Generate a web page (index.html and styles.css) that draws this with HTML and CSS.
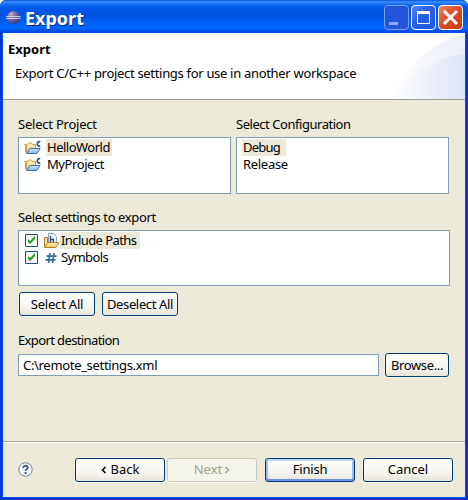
FILE: index.html
```
<!DOCTYPE html>
<html lang="en">
<head>
<meta charset="utf-8">
<title>Export</title>
<link rel="stylesheet" href="styles.css">
</head>
<body>
<svg class="defs" width="0" height="0" aria-hidden="true">
  <defs>
    <linearGradient id="gold" x1="0" y1="0" x2="0" y2="1"><stop offset="0" stop-color="#fff3c0"/><stop offset="1" stop-color="#f3cb73"/></linearGradient>
    <linearGradient id="sky" x1="0" y1="0" x2="0" y2="1"><stop offset="0" stop-color="#d5eafa"/><stop offset="1" stop-color="#7eb0dc"/></linearGradient>
    <symbol id="project" viewBox="0 0 17 16">
      <path d="M2.500 13V4.500h1l1-1.500h3l1 1.500h3V9" fill="url(#gold)" stroke="#cf9a4c"/>
      <path d="M0 4.500h2M1.500 5v7" stroke="#d8a864" fill="none"/>
      <path d="M2.500 13.500 6 8.500h10.200l-3.400 5z" fill="url(#sky)" stroke="#3c6fb8"/>
      <path d="M16.300 1.800c-4-1.200-4 5.400 0 4.200" fill="none" stroke="#245583" stroke-width="1.700"/>
    </symbol>
    <symbol id="check" viewBox="0 0 13 13">
      <path d="M.5.5h12v12H.5z" fill="#f7f7f4" stroke="#1c5180"/>
      <path d="M3 5v3l2 2 5-5V2L5 7z" fill="#21a121"/>
    </symbol>
  </defs>
</svg>
<div class="window">
  <div class="titlebar">
    <svg class="logo" viewBox="0 0 16 16"><defs><radialGradient id="orb" cx=".3" cy=".25" r=".9"><stop offset="0" stop-color="#d0a9b8"/><stop offset=".5" stop-color="#6d62a6"/><stop offset="1" stop-color="#2b2a70"/></radialGradient></defs><circle cx="8.500" cy="7.500" r="6.500" fill="url(#orb)"/><path d="M1 6.500h14.500M1 8.500h14.500" stroke="#d5d8f0" stroke-width=".9"/></svg>
    <h1 class="title">Export</h1>
    <div class="controls">
      <span class="ctl min"><i></i></span>
      <span class="ctl max"><i></i></span>
      <span class="ctl close"><svg viewBox="0 0 25 25"><path d="M7 7l11 11M18 7 7 18" stroke="#fff" stroke-width="3" stroke-linecap="square"/></svg></span>
    </div>
  </div>
  <div class="client">
    <header class="banner">
      <svg class="swoosh" viewBox="0 0 75 66"><defs><linearGradient id="sw" x1="0" y1="0" x2="1" y2="0"><stop offset="0" stop-color="#fff"/><stop offset="1" stop-color="#e9eef8"/></linearGradient><linearGradient id="sx" x1="0" y1="0" x2="1" y2="0"><stop offset="0" stop-color="#fff"/><stop offset="1" stop-color="#dbe3f4"/></linearGradient></defs><path d="M0 66C14 38 40 8 75 1v65z" fill="url(#sw)"/><path d="M0 66C16 45 40 25 75 21v45z" fill="url(#sx)"/></svg>
      <h2><span class="t t-head">Export</span></h2>
      <p><span class="t t-desc">Export C/C++ project settings for use in another workspace</span></p>
    </header>
    <main class="form">
      <div class="columns">
        <section>
          <div class="label"><span class="t t-proj">Select Project</span></div>
          <ul class="list projects">
            <li><svg class="icon"><use href="#project"/></svg><span class="item sel"><span class="t t-hello">HelloWorld</span></span></li>
            <li><svg class="icon"><use href="#project"/></svg><span class="item"><span class="t t-my">MyProject</span></span></li>
          </ul>
        </section>
        <section>
          <div class="label"><span class="t t-conf">Select Configuration</span></div>
          <ul class="list configs">
            <li><span class="item sel"><span class="t t-debug">Debug</span></span></li>
            <li><span class="item"><span class="t t-release">Release</span></span></li>
          </ul>
        </section>
      </div>
      <div class="label settings-label"><span class="t t-set">Select settings to export</span></div>
      <ul class="list settings">
        <li><svg class="box"><use href="#check"/></svg><svg class="icon" viewBox="0 0 17 16"><path d="M1.500 14V4.500h3V14" fill="#fbe3a2" stroke="#b97c20"/><path d="M5.500.5h5l3 3v7h-8z" fill="#f1f5fc" stroke="#8d9cc0"/><path d="M7.500 3v6M8 6.500h2.500V9" fill="none" stroke="#27457f" stroke-width="1.300"/><path d="M1.500 14.500 4.500 9.500h11.500l-3.500 5z" fill="url(#gold)" stroke="#b97c20"/></svg><span class="item sel"><span class="t t-inc">Include Paths</span></span></li>
        <li><svg class="box"><use href="#check"/></svg><svg class="icon" viewBox="0 0 17 16"><path d="M7 3 5.500 13M11 3 9.500 13M3.500 6.200h10M2.500 9.900h10" stroke="#336b9b" stroke-width="1.700" fill="none"/></svg><span class="item"><span class="t t-sym">Symbols</span></span></li>
      </ul>
      <div class="row">
        <button class="btn w76"><span class="t t-sall">Select All</span></button>
        <button class="btn w76"><span class="t t-dall">Deselect All</span></button>
      </div>
      <div class="label dest-label"><span class="t t-dest">Export destination</span></div>
      <div class="row dest">
        <div class="field"><span class="t t-file">C:\remote_settings.xml</span></div>
        <button class="btn w64"><span class="t t-browse">Browse...</span></button>
      </div>
    </main>
    <footer class="footer">
      <svg class="help" viewBox="0 0 15 15"><circle cx="7.500" cy="7.500" r="6.700" fill="#fbfcfe" stroke="#7085a3"/><path d="M5.200 6c0-3 4.600-3 4.600-.4 0 1.700-2.300 1.600-2.300 3.400M7.500 10v1.900" stroke="#3d5b8c" stroke-width="1.900" fill="none"/></svg>
      <button class="btn w90"><span class="t t-back"><svg class="chev" viewBox="0 0 5 8"><path d="M4.500 1 1.500 4l3 3"/></svg>Back</span></button>
      <button class="btn w90 off"><span class="t t-next">Next<svg class="chev" viewBox="0 0 5 8"><path d="M.5 1l3 3-3 3"/></svg></span></button>
      <button class="btn w90 primary"><span class="t t-finish">Finish</span></button>
      <button class="btn w90"><span class="t t-cancel">Cancel</span></button>
    </footer>
  </div>
</div>
</body>
</html>
```
FILE: styles.css
```
* { box-sizing: border-box; }
body { margin: 0; font: 13px/17px "Noto Sans", sans-serif; color: #000; }
h1, h2, p, ul { margin: 0; padding: 0; font-size: inherit; }
.defs { position: absolute; }
.window { width: 468px; height: 500px; display: flex; flex-direction: column; background: #0831d9; border-radius: 6px 6px 0 0; overflow: hidden; }
.titlebar { height: 33px; display: flex; align-items: center; padding: 2px 5px 0; background: linear-gradient(#0a50d8 0, #3c92ff 2px, #1570f5 4px, #0058e8 8px, #0053e1 15px, #005df5 22px, #0067ff 28px, #0050ea 31px, #003dd0 33px); }
.logo { width: 16px; height: 16px; }
.title { margin-left: 4px; font-size: 18px; line-height: 24px; color: #fff; text-shadow: 1px 1px #0a2a86; }
.controls { display: flex; gap: 2px; margin-left: auto; }
.ctl { width: 25px; height: 25px; border: 1px solid #fff; border-radius: 4px; display: flex; background: linear-gradient(135deg, #5a88ee, #2b5fe0 40%, #1a58e8); }
.ctl svg { width: 25px; height: 25px; margin: -1px; }
.min { border-color: #7e9ff0; background: #2355dc; }
.min i { width: 9px; height: 3px; margin: 16px 0 0 4px; background: #8fa8f0; }
.max i { width: 13px; height: 13px; margin: 5px; border: 1px solid #fff; border-top-width: 3px; }
.close { background: linear-gradient(135deg, #ee8468, #e04d24 45%, #c43a10); }
.client { flex: 1; margin: 0 3px 3px; background: #ece9d8; display: flex; flex-direction: column; box-shadow: 0 0 0 1px #0050ee; }
.banner { position: relative; height: 67px; background: #fff; border-bottom: 1px solid #9d9e93; padding: 8px 5px; }
.swoosh { position: absolute; right: 0; top: 0; width: 75px; height: 66px; }
.banner h2, .banner p { position: relative; }
.banner p { margin: 7px 0 0 7px; }
.t { white-space: nowrap; display: inline-block; }
.t-desc { letter-spacing: -.31px; }
.t-proj { letter-spacing: -.22px; }
.t-conf { letter-spacing: -.46px; }
.t-hello { letter-spacing: -.5px; }
.t-my { letter-spacing: -.42px; }
.t-debug { letter-spacing: -.8px; }
.t-release { letter-spacing: -.3px; }
.t-set { letter-spacing: -.38px; }
.t-inc { letter-spacing: -.58px; }
.t-sym { letter-spacing: -.6px; }
.t-sall { letter-spacing: -.2px; }
.t-dall { letter-spacing: -.35px; }
.t-dest { letter-spacing: -.62px; }
.t-file { letter-spacing: -.32px; }
.t-browse { letter-spacing: -.35px; }
.t-finish { letter-spacing: -.2px; }
.form { flex: 1; padding: 16px 15px 0; }
.columns { display: grid; grid-template-columns: 213px 213px; gap: 5px; }
.label { height: 17px; margin-bottom: 4px; }
.list { list-style: none; background: #fff; border: 1px solid #7f9db9; height: 57px; padding: 1px 5px; }
.list li { display: flex; height: 17px; align-items: center; }
.item { height: 17px; padding: 0 1px; }
.sel { background: #ece9d8; }
.projects .sel { width: 66px; }
.configs .sel { width: 44px; }
.settings .sel { width: 80px; }
.icon { width: 17px; height: 16px; }
.projects .item { margin-left: 5px; }
.box { width: 13px; height: 13px; margin: 0 5px 0 1px; }
.settings { width: 432px; height: 56px; }
.settings-label { margin-top: 15px; }
.row { display: flex; gap: 7px; padding: 6px 1px 0; }
.btn { height: 24px; padding: 0; border: 1px solid #003c74; border-radius: 3px; background: linear-gradient(#fff, #f4f3ee 70%, #e6e3d8); font: inherit; color: #000; text-align: center; box-shadow: 0 1px #f8f7f0; }
.w76 { width: 76px; }
.w64 { width: 64px; }
.w90 { width: 90px; }
.off { margin: 0 8px 0 2px; border-color: #c9c7ba; background: #f5f4ea; color: #a1a192; }
.primary { margin-right: 8px; box-shadow: inset 0 2px #bdd3f8, inset 0 -2px #6f8fe0, inset 2px 0 #9db9f0, inset -2px 0 #9db9f0; }
.chev { width: 5px; height: 8px; fill: none; stroke: currentColor; stroke-width: 1.5; }
.t-back .chev { margin-right: 5px; }
.t-next .chev { margin-left: 3px; }
.dest-label { margin-top: 16px; }
.dest { padding: 0; gap: 6px; align-items: center; }
.field { width: 361px; height: 22px; background: #fff; border: 1px solid #7f9db9; padding: 2px 4px; }
.footer { height: 56px; border-top: 1px solid #aca899; box-shadow: inset 0 1px #fff; display: flex; align-items: center; padding: 0 12px 0 15px; }
.help { width: 15px; height: 15px; margin-right: auto; }
```
